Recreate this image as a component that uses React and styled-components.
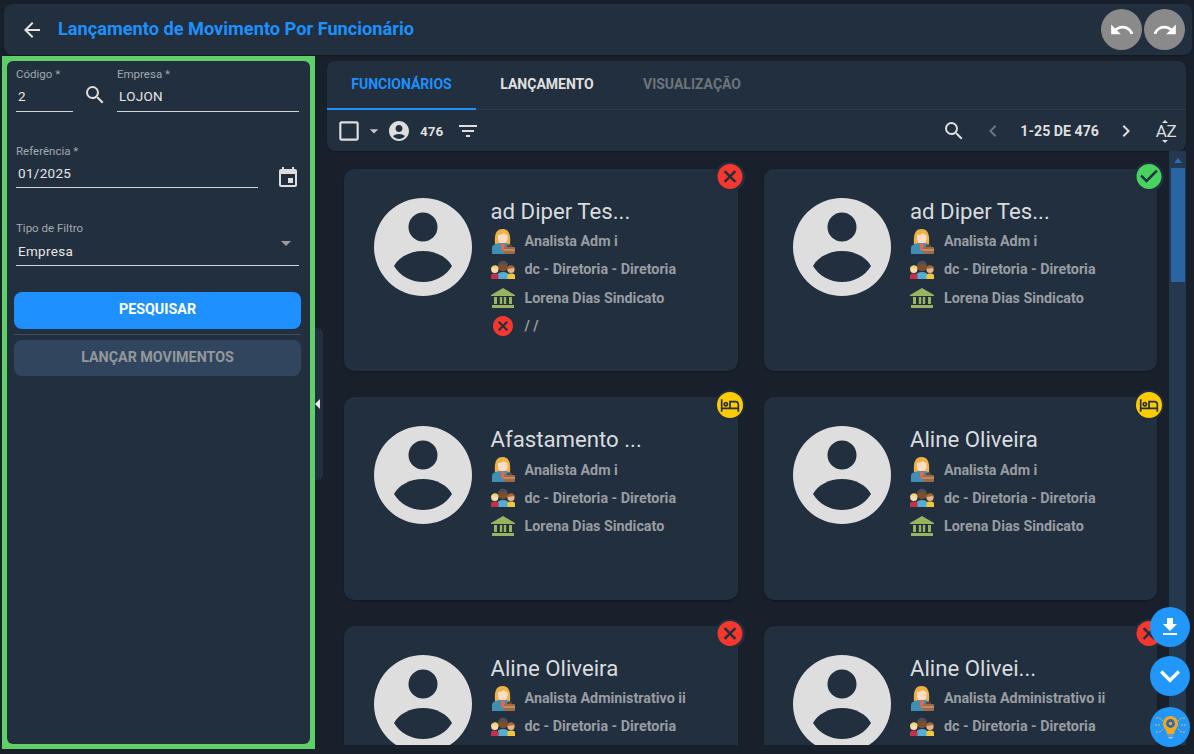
import React from "react";
import styled, { createGlobalStyle } from "styled-components";
import {
  MdArrowBack,
  MdSearch,
  MdEvent,
  MdUndo,
  MdRedo,
  MdArrowDropDown,
  MdCheckBoxOutlineBlank,
  MdAccountCircle,
  MdFilterList,
  MdChevronLeft,
  MdChevronRight,
  MdCancel,
  MdCheckCircle,
  MdOutlineHotel,
  MdFileDownload,
  MdKeyboardArrowDown,
  MdArrowLeft,
} from "react-icons/md";

const GlobalStyle = createGlobalStyle`
  html, body {
    margin: 0;
    height: 100%;
    background: #18212b;
    overflow: hidden;
  }
  * { box-sizing: border-box; }
  body { font-family: Roboto, "Liberation Sans", sans-serif; }
`;

const Page = styled.div`
  width: 1194px;
  height: 754px;
  display: flex;
  flex-direction: column;
  overflow: hidden;
  position: relative;
`;

const Header = styled.header`
  height: 51px;
  margin: 4px 2px 1px 4px;
  flex: none;
  background: #212f3f;
  border-radius: 8px;
  display: flex;
  align-items: center;
  padding: 0 7px 0 16px;
  color: #e4e4e4;
  box-shadow: 0 1px 2px rgba(0, 0, 0, 0.3);
`;

const Title = styled.h1`
  margin: 0 0 2px 14px;
  flex: 1;
  font-size: 18.2px;
  font-weight: 700;
  color: #1e90ff;
`;

const RoundAction = styled.button`
  width: 41px;
  height: 41px;
  margin-left: 2px;
  border: 0;
  padding: 0;
  border-radius: 50%;
  background: #8a8a8a;
  color: #fff;
  display: flex;
  align-items: center;
  justify-content: center;
`;

const Body = styled.div`
  flex: 1;
  min-height: 0;
  display: flex;
  padding-left: 2px;
`;

const Sidebar = styled.aside`
  width: 313px;
  height: 693px;
  flex: none;
  border: 5px solid #5fd068;
  background: #5fd068;
`;

const SidebarInner = styled.div`
  height: 100%;
  background: #212f3f;
  border-radius: 6px;
  padding: 6px 9px 0 7px;
`;

const FieldRow = styled.div`
  display: flex;
  align-items: flex-start;
  margin-bottom: ${(p) => p.$mb || 0}px;
  padding-right: 2px;
  padding-left: 2px;
`;

const Field = styled.div`
  width: ${(p) => (p.$w ? `${p.$w}px` : "auto")};
  flex: ${(p) => (p.$w ? "none" : 1)};
  position: relative;
`;

const Label = styled.label`
  display: block;
  font-size: 11.5px;
  line-height: 14px;
  height: 14px;
  color: #a3a8ae;
`;

const Value = styled.div`
  height: ${(p) => p.$h || 30}px;
  padding: ${(p) => p.$pt || 7}px 0 0 2px;
  font-size: 13.5px;
  line-height: 16px;
  letter-spacing: 0.3px;
  color: #e6e6e6;
  border-bottom: 1px solid #d5d5d5;
`;

const IconSlot = styled.div`
  width: ${(p) => p.$w}px;
  flex: none;
  display: flex;
  justify-content: center;
  padding-top: ${(p) => p.$top}px;
  color: #dedede;
`;

const SelectArrow = styled.span`
  position: absolute;
  right: 1px;
  top: 10px;
  color: #9c9c9c;
  display: flex;
`;

const PrimaryButton = styled.button`
  display: block;
  width: 287px;
  height: 37px;
  border: 0;
  border-radius: 8px;
  padding: 0 0 3px;
  background: #1e90ff;
  color: #fff;
  font: 700 14.3px Roboto, sans-serif;
`;

const Divider = styled.div`
  width: 287px;
  height: 1px;
  margin: 5px 0;
  background: #3f4c5b;
`;

const DisabledButton = styled(PrimaryButton)`
  height: 36px;
  padding-bottom: 2px;
  background: #31465e;
  color: #94989d;
`;

const CollapseHandle = styled.div`
  width: 8px;
  height: 152px;
  margin: 272px 4px 0 0;
  flex: none;
  background: #212f3f;
  border-radius: 0 6px 6px 0;
  display: flex;
  align-items: center;
  color: #e8e8e8;
  overflow: hidden;
  svg { margin-left: -9px; flex: none; }
`;

const Main = styled.main`
  width: 859px;
  flex: none;
  margin-top: 5px;
  height: 684px;
  display: flex;
  flex-direction: column;
`;

const TopPanel = styled.div`
  height: 90px;
  flex: none;
  background: #212f3f;
  border-radius: 8px;
  box-shadow: 0 1px 2px rgba(0, 0, 0, 0.3);
`;

const Tabs = styled.div`
  height: 49px;
  display: flex;
  border-bottom: 1px solid #2b3948;
`;

const Tab = styled.div`
  height: 49px;
  width: ${(p) => p.$w}px;
  padding-bottom: 2px;
  display: flex;
  align-items: center;
  justify-content: center;
  font-size: 14px;
  font-weight: 700;
  color: ${(p) => p.$color};
  border-bottom: 2px solid ${(p) => (p.$active ? "#1e90ff" : "transparent")};
`;

const Toolbar = styled.div`
  height: 41px;
  display: flex;
  align-items: center;
  padding: 0 9px 0 9px;
  color: #dedede;
`;

const Count = styled.span`
  font-size: 13.5px;
  font-weight: 700;
  margin: 0 13px 0 9px;
`;

const Spacer = styled.div`
  flex: 1;
`;

const PageInfo = styled.span`
  font-size: 14.2px;
  font-weight: 700;
  margin: 0 15px 0 15px;
`;

const IconGap = styled.span`
  display: flex;
  margin: ${(p) => p.$m || "0"};
  color: ${(p) => p.$color || "inherit"};
`;

const SortIcon = styled.span`
  position: relative;
  width: 22px;
  height: 24px;
  margin-left: 17px;
  font-size: 17px;
  line-height: 25px;
  letter-spacing: -0.5px;
  text-align: center;
  color: #dedede;
  &::before, &::after {
    content: "";
    position: absolute;
    left: 7px;
    border-left: 3px solid transparent;
    border-right: 3px solid transparent;
  }
  &::before { top: 1px; border-bottom: 3px solid #dedede; }
  &::after { bottom: 0; border-top: 3px solid #dedede; }
`;

const Content = styled.div`
  flex: 1;
  min-height: 0;
  display: flex;
  overflow: hidden;
`;

const CardGrid = styled.div`
  flex: 1;
  display: grid;
  grid-template-columns: 393.5px 393.5px;
  grid-auto-rows: 202.5px;
  column-gap: 26px;
  row-gap: 26px;
  padding: 17.900px 0 0 17px;
`;

const Scrollbar = styled.div`
  width: 17px;
  flex: none;
  background: #24384f;
  display: flex;
  flex-direction: column;
  align-items: center;
  padding-top: 7px;
`;

const ScrollArrow = styled.div`
  border-left: 4px solid transparent;
  border-right: 4px solid transparent;
  border-bottom: 5px solid #2a6cb0;
`;

const ScrollThumb = styled.div`
  width: 14px;
  height: 114px;
  margin-top: 5px;
  background: #2a65a3;
`;

const Card = styled.article`
  position: relative;
  background: #212f3f;
  border-radius: 10px;
  padding: 29px 0 0 29.500px;
  display: flex;
  box-shadow: 0 1px 2px rgba(0, 0, 0, 0.35);
`;

const Avatar = styled.svg`
  width: 98px;
  height: 98px;
  flex: none;
`;

const CardInfo = styled.div`
  margin: -2px 0 0 19px;
`;

const Name = styled.h2`
  margin: 0;
  height: 31px;
  font-size: 22.2px;
  line-height: 30px;
  font-weight: 400;
  color: #d9dcdf;
`;

const InfoRow = styled.div`
  height: 28.4px;
  display: flex;
  align-items: center;
  font-size: 14.3px;
  font-weight: 700;
  color: #999da2;
`;

const RowIcon = styled.span`
  width: 24px;
  height: 24px;
  margin-right: 10px;
  display: flex;
  align-items: center;
  justify-content: center;
  flex: none;
`;

const Badge = styled.span`
  position: absolute;
  top: -7px;
  right: -7px;
  width: 30px;
  height: 30px;
  border-radius: 50%;
  background: ${(p) => (p.$bed ? "#ffcc00" : "#212f3f")};
  border: ${(p) => (p.$bed ? "2px solid #212f3f" : "0")};
  color: ${(p) => p.$color};
  display: flex;
  align-items: center;
  justify-content: center;
`;

const FabStack = styled.div`
  position: absolute;
  right: 4px;
  top: 607px;
  display: flex;
  flex-direction: column;
`;

const Fab = styled.button`
  width: 40px;
  height: 40px;
  margin-bottom: ${(p) => p.$mb}px;
  border: 0;
  padding: 0;
  border-radius: 50%;
  background: #2196fb;
  color: #fff;
  display: flex;
  align-items: center;
  justify-content: center;
`;

const PersonAvatar = () => (
  <Avatar viewBox="0 0 98 98">
    <circle cx="49" cy="49" r="49" fill="#dedede" />
    <circle cx="49" cy="29" r="14.5" fill="#212f3f" />
    <path d="M20 68 C25 59 36 53 49 53 C62 53 73 59 78 68 C72 78 61 84 49 84 C37 84 26 78 20 68 Z" fill="#212f3f" />
  </Avatar>
);

const WorkerIcon = () => (
  <svg width="24" height="25" viewBox="0 0 24 25">
    <path d="M4 15 C3 4 6 0 11.500 0 C17 0 20 4 19 15 Z" fill="#efb244" />
    <path d="M7 6 C9 6 12 5 13 4 C14 5 15 6 16.500 6 L16.500 10 C16.500 13 14 15 11.800 15 C9.500 15 7 13 7 10 Z" fill="#fadcc8" />
    <path d="M1 25 L1 19 C1 16 4 15 8.500 14 L15 14 C19 15 21 16 21 19 L21 25 Z" fill="#3f8fb5" />
    <path d="M9.500 14.500 L14 14.500 L12.800 22 L10.700 22 Z" fill="#e9674f" />
    <rect x="13" y="18" width="11" height="7" rx="1" fill="#a06a45" />
    <rect x="13" y="20.500" width="11" height="1" fill="#dcae80" />
    <rect x="16" y="16" width="5" height="2" fill="#6b4329" />
  </svg>
);

const TeamIcon = () => (
  <svg width="24" height="19" viewBox="0 0 24 19">
    <path d="M7 19 L7 14 C7 13 9 12 12 12 C15 12 17 13 17 14 L17 19 Z" fill="#55acd5" />
    <circle cx="12" cy="6.500" r="4.800" fill="#7d4e2e" />
    <path d="M7 5.500 C7 -1 17 -1 17 5.500 C14 3.500 10 3.500 7 5.500 Z" fill="#4b5058" />
    <path d="M0 19 L0 15.500 C0 14 2 13.500 4 13.500 C6 13.500 7.500 14 7.500 15.500 L7.500 19 Z" fill="#c2304a" />
    <circle cx="3.800" cy="9.500" r="3.600" fill="#f7dcb0" />
    <path d="M0 10 C-0.500 4 8 4 7.500 9 C5 8.500 3 8 2 7.500 Z" fill="#f1d36b" />
    <path d="M16.500 19 L16.500 15.500 C16.500 14 18 13.500 20 13.500 C22 13.500 24 14 24 15.500 L24 19 Z" fill="#f2c83a" />
    <circle cx="20" cy="9.500" r="3.600" fill="#e9b48a" />
    <path d="M16.500 9 C16 4 24.500 4 24 10 L23 8 C21 8.500 18.500 8.500 16.500 9 Z" fill="#a5683a" />
  </svg>
);

const BankIcon = () => (
  <svg width="24" height="20" viewBox="0 0 24 20">
    <path d="M12 0 L24 7 L24 8 L0 8 L0 7 Z" fill="#9ab35f" />
    <path d="M3 9h3v7H3z M8.800 9h2.400v7H8.800z M12.800 9h2.400v7h-2.400z M18 9h3v7h-3z" fill="#9ab35f" />
    <path d="M1 17h22v3H1z" fill="#9ab35f" />
  </svg>
);

const BulbIcon = () => (
  <svg width="40" height="40" viewBox="0 0 40 40">
    <path d="M20.500 9 C15.500 9 13 13 13 16.500 C13 21 16.500 22.500 17 27 L24 27 C24.500 22.500 28 21 28 16.500 C28 13 25.500 9 20.500 9 Z" fill="#f5a623" />
    <circle cx="20.500" cy="16.500" r="4.400" fill="#2a6ba8" />
    <circle cx="20.500" cy="16.500" r="1.800" fill="#f5a623" />
    <path d="M17.500 27.500 h6 v2 h-6z" fill="#7e9cb0" />
    <path d="M18.500 30 h4 v1.500 h-4z" fill="#b7c4cc" />
    <path d="M6 11h4l3 3M5 18h6M6 25h4l3-3M35 11h-4l-3 3M36 18h-6M35 25h-4l-3-3" stroke="#f3b44e" strokeWidth="1" strokeDasharray="2 1" fill="none" />
  </svg>
);

const StatusBadge = ({ kind }) => {
  if (kind === "bed") {
    return (
      <Badge $bed $color="#212f3f">
        <MdOutlineHotel size={20} />
      </Badge>
    );
  }
  if (kind === "ok") {
    return (
      <Badge $color="#48d260">
        <MdCheckCircle size={31} />
      </Badge>
    );
  }
  return (
    <Badge $color="#f8372e">
      <MdCancel size={31} />
    </Badge>
  );
};

const cards = [
  { name: "ad Diper Tes...", role: "Analista Adm i", status: "error", union: "Lorena Dias Sindicato", date: true },
  { name: "ad Diper Tes...", role: "Analista Adm i", status: "ok", union: "Lorena Dias Sindicato" },
  { name: "Afastamento ...", role: "Analista Adm i", status: "bed", union: "Lorena Dias Sindicato" },
  { name: "Aline Oliveira", role: "Analista Adm i", status: "bed", union: "Lorena Dias Sindicato" },
  { name: "Aline Oliveira", role: "Analista Administrativo ii", status: "error" },
  { name: "Aline Olivei...", role: "Analista Administrativo ii", status: "error" },
];

const EmployeeCard = ({ name, role, status, union, date }) => (
  <Card>
    <PersonAvatar />
    <CardInfo>
      <Name>{name}</Name>
      <InfoRow>
        <RowIcon><WorkerIcon /></RowIcon>
        {role}
      </InfoRow>
      <InfoRow>
        <RowIcon><TeamIcon /></RowIcon>
        dc - Diretoria - Diretoria
      </InfoRow>
      {union && (
        <InfoRow>
          <RowIcon><BankIcon /></RowIcon>
          {union}
        </InfoRow>
      )}
      {date && (
        <InfoRow>
          <RowIcon>
            <IconGap $color="#f8372e"><MdCancel size={24} /></IconGap>
          </RowIcon>
          / /
        </InfoRow>
      )}
    </CardInfo>
    <StatusBadge kind={status} />
  </Card>
);

export default function App() {
  return (
    <Page>
      <GlobalStyle />
      <Header>
        <MdArrowBack size={24} />
        <Title>Lançamento de Movimento Por Funcionário</Title>
        <RoundAction><MdUndo size={26} /></RoundAction>
        <RoundAction><MdRedo size={26} /></RoundAction>
      </Header>
      <Body>
        <Sidebar>
          <SidebarInner>
            <FieldRow $mb={32}>
              <Field $w={57}>
                <Label>Código *</Label>
                <Value $h={31}>2</Value>
              </Field>
              <IconSlot $w={44} $top={16}><MdSearch size={24} /></IconSlot>
              <Field>
                <Label>Empresa *</Label>
                <Value $h={31}>LOJON</Value>
              </Field>
            </FieldRow>
            <FieldRow $mb={31}>
              <Field $w={242}>
                <Label>Referência *</Label>
                <Value>01/2025</Value>
              </Field>
              <IconSlot $w={60} $top={22}><MdEvent size={24} /></IconSlot>
            </FieldRow>
            <FieldRow $mb={26}>
              <Field>
                <Label>Tipo de Filtro</Label>
                <Value $h={31} $pt={8}>Empresa</Value>
                <SelectArrow><MdArrowDropDown size={24} /></SelectArrow>
              </Field>
            </FieldRow>
            <PrimaryButton>PESQUISAR</PrimaryButton>
            <Divider />
            <DisabledButton>LANÇAR MOVIMENTOS</DisabledButton>
          </SidebarInner>
        </Sidebar>
        <CollapseHandle><MdArrowLeft size={24} /></CollapseHandle>
        <Main>
          <TopPanel>
            <Tabs>
              <Tab $w={149} $active $color="#1e90ff">FUNCIONÁRIOS</Tab>
              <Tab $w={142} $color="#e0e0e0">LANÇAMENTO</Tab>
              <Tab $w={148} $color="#6c747c">VISUALIZAÇÃO</Tab>
            </Tabs>
            <Toolbar>
              <IconGap><MdCheckBoxOutlineBlank size={26} /></IconGap>
              <IconGap $color="#c8c8c8" $m="0 0 0 2px"><MdArrowDropDown size={20} /></IconGap>
              <IconGap $m="0 0 0 3px"><MdAccountCircle size={24} /></IconGap>
              <Count>476</Count>
              <IconGap><MdFilterList size={24} /></IconGap>
              <Spacer />
              <IconGap $m="0 15px 0 0"><MdSearch size={24} /></IconGap>
              <IconGap $color="#6f757c"><MdChevronLeft size={24} /></IconGap>
              <PageInfo>1-25 DE 476</PageInfo>
              <IconGap><MdChevronRight size={24} /></IconGap>
              <SortIcon>AZ</SortIcon>
            </Toolbar>
          </TopPanel>
          <Content>
            <CardGrid>
              {cards.map((c, i) => (
                <EmployeeCard key={i} {...c} />
              ))}
            </CardGrid>
            <Scrollbar>
              <ScrollArrow />
              <ScrollThumb />
            </Scrollbar>
          </Content>
        </Main>
      </Body>
      <FabStack>
        <Fab $mb={9}><MdFileDownload size={24} /></Fab>
        <Fab $mb={11}><MdKeyboardArrowDown size={48} /></Fab>
        <Fab $mb={0}><BulbIcon /></Fab>
      </FabStack>
    </Page>
  );
}
